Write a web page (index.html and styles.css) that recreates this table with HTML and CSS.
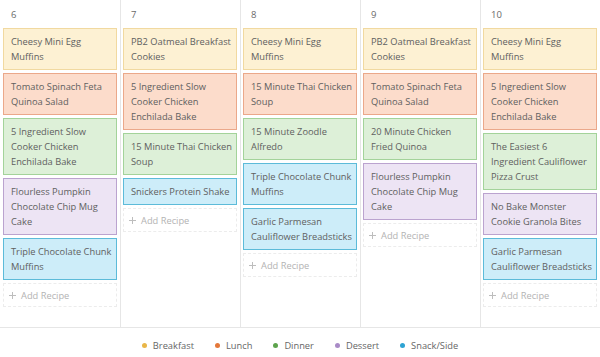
FILE: index.html
```html
<!DOCTYPE html>
<html>
<head>
<meta charset="utf-8">
<link rel="stylesheet" href="styles.css">
</head>
<body>
<div class="calendar">
  <div class="day">
    <div class="day-num">6</div>
    <div class="meals">
      <div class="card breakfast">Cheesy Mini Egg<br>Muffins</div>
      <div class="card lunch">Tomato Spinach Feta<br>Quinoa Salad</div>
      <div class="card dinner">5 Ingredient Slow<br>Cooker Chicken<br>Enchilada Bake</div>
      <div class="card dessert">Flourless Pumpkin<br>Chocolate Chip Mug<br>Cake</div>
      <div class="card snack">Triple Chocolate Chunk<br>Muffins</div>
      <div class="add"><span class="plus"></span>Add Recipe</div>
    </div>
  </div>
  <div class="day">
    <div class="day-num">7</div>
    <div class="meals">
      <div class="card breakfast">PB2 Oatmeal Breakfast<br>Cookies</div>
      <div class="card lunch">5 Ingredient Slow<br>Cooker Chicken<br>Enchilada Bake</div>
      <div class="card dinner">15 Minute Thai Chicken<br>Soup</div>
      <div class="card snack">Snickers Protein Shake</div>
      <div class="add"><span class="plus"></span>Add Recipe</div>
    </div>
  </div>
  <div class="day">
    <div class="day-num">8</div>
    <div class="meals">
      <div class="card breakfast">Cheesy Mini Egg<br>Muffins</div>
      <div class="card lunch">15 Minute Thai Chicken<br>Soup</div>
      <div class="card dinner">15 Minute Zoodle<br>Alfredo</div>
      <div class="card snack">Triple Chocolate Chunk<br>Muffins</div>
      <div class="card snack">Garlic Parmesan<br>Cauliflower Breadsticks</div>
      <div class="add"><span class="plus"></span>Add Recipe</div>
    </div>
  </div>
  <div class="day">
    <div class="day-num">9</div>
    <div class="meals">
      <div class="card breakfast">PB2 Oatmeal Breakfast<br>Cookies</div>
      <div class="card lunch">Tomato Spinach Feta<br>Quinoa Salad</div>
      <div class="card dinner">20 Minute Chicken<br>Fried Quinoa</div>
      <div class="card dessert">Flourless Pumpkin<br>Chocolate Chip Mug<br>Cake</div>
      <div class="add"><span class="plus"></span>Add Recipe</div>
    </div>
  </div>
  <div class="day">
    <div class="day-num">10</div>
    <div class="meals">
      <div class="card breakfast">Cheesy Mini Egg<br>Muffins</div>
      <div class="card lunch">5 Ingredient Slow<br>Cooker Chicken<br>Enchilada Bake</div>
      <div class="card dinner">The Easiest 6<br>Ingredient Cauliflower<br>Pizza Crust</div>
      <div class="card dessert">No Bake Monster<br>Cookie Granola Bites</div>
      <div class="card snack">Garlic Parmesan<br>Cauliflower Breadsticks</div>
      <div class="add"><span class="plus"></span>Add Recipe</div>
    </div>
  </div>
</div>
<div class="legend">
  <div class="item"><span class="dot d-breakfast"></span>Breakfast</div>
  <div class="item"><span class="dot d-lunch"></span>Lunch</div>
  <div class="item"><span class="dot d-dinner"></span>Dinner</div>
  <div class="item"><span class="dot d-dessert"></span>Dessert</div>
  <div class="item"><span class="dot d-snack"></span>Snack/Side</div>
</div>
</body>
</html>
```
FILE: styles.css
```css
* { box-sizing: border-box; }
html, body { margin: 0; padding: 0; background: #fff; }
body {
  width: 600px;
  height: 357px;
  overflow: hidden;
  font-family: "Open Sans", "Noto Sans", sans-serif;
  font-size: 9.3px;
  color: #606060;
}
.calendar {
  display: grid;
  grid-template-columns: repeat(5, 120px);
  height: 328px;
  border-bottom: 1px solid #e6e6e6;
}
.day {
  padding: 0 3px;
}
.day + .day {
  border-left: 1px solid #e6e6e6;
  padding-left: 2px;
}
.day-num {
  height: 28px;
  line-height: 30px;
  padding-left: 8px;
  color: #6a6a6a;
  font-size: 9.5px;
}
.meals {
  display: flex;
  flex-direction: column;
  gap: 3px;
}
.card {
  border: 1px solid;
  padding: 5px 7px;
  line-height: 15px;
  white-space: nowrap;
  overflow: hidden;
}
.breakfast { background: #fdf1d3; border-color: #f1d9a0; }
.lunch { background: #fcdccb; border-color: #eba88a; }
.dinner { background: #ddf0d8; border-color: #a3d39a; }
.dessert { background: #ede4f4; border-color: #bba3cf; }
.snack { background: #cdedf9; border-color: #5cbbd9; }
.add {
  height: 24px;
  border: 1px dashed #ececec;
  display: flex;
  align-items: center;
  gap: 5px;
  padding-left: 5px;
  color: #b3b3b3;
}
.plus {
  width: 7px;
  height: 7px;
  position: relative;
}
.plus::before, .plus::after {
  content: "";
  position: absolute;
  background: #bdbdbd;
}
.plus::before { left: 3px; top: 0; width: 1px; height: 7px; }
.plus::after { top: 3px; left: 0; width: 7px; height: 1px; }
.legend {
  display: flex;
  justify-content: center;
  gap: 21px;
  padding-top: 11px;
  line-height: 13px;
  color: #666;
}
.item {
  display: flex;
  align-items: center;
  gap: 6px;
}
.dot {
  width: 5px;
  height: 5px;
  border-radius: 50%;
}
.d-breakfast { background: #e9b648; }
.d-lunch { background: #e4783a; }
.d-dinner { background: #5da34d; }
.d-dessert { background: #a98bc7; }
.d-snack { background: #2ea3d3; }
```
